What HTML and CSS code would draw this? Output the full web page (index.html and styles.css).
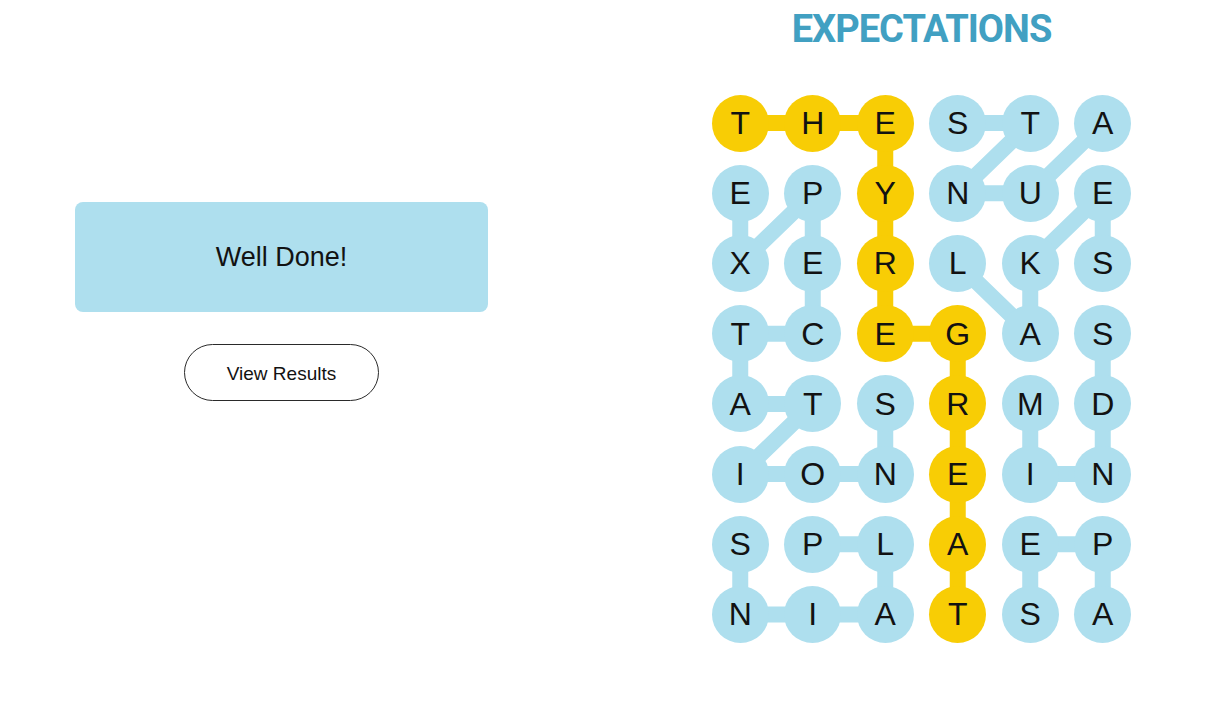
FILE: index.html
```html
<!DOCTYPE html>
<html lang="en">
<head>
<meta charset="utf-8">
<title>Strands – Expectations</title>
<link rel="stylesheet" href="styles.css">
</head>
<body>
<main class="page">
  <section class="left">
    <div class="done-box">Well Done!</div>
    <button class="results-btn" type="button">View Results</button>
  </section>
  <section class="right">
    <h1 class="theme">EXPECTATIONS</h1>
    <div class="board">
      <svg class="links" viewBox="0 0 435 561.6" width="435" height="561.6" aria-hidden="true">
        <g class="blue-links">
          <polyline points="398.75,35.1 326.25,105.3 253.75,105.3 326.25,35.1 253.75,35.1"/>
          <polyline points="36.25,105.3 36.25,175.5 108.75,105.3 108.75,245.7 36.25,245.7 36.25,315.9 108.75,315.9 36.25,386.1 181.25,386.1 181.25,315.9"/>
          <polyline points="253.75,175.5 326.25,245.7 326.25,175.5 398.75,105.3 398.75,175.5"/>
          <polyline points="326.25,315.9 326.25,386.1 398.75,386.1 398.75,315.9 398.75,245.7"/>
          <polyline points="108.75,456.3 181.25,456.3 181.25,526.5 36.25,526.5 36.25,456.3"/>
          <polyline points="398.75,526.5 398.75,456.3 326.25,456.3 326.25,526.5"/>
        </g>
        <g class="yellow-links">
          <polyline points="36.25,35.1 181.25,35.1 181.25,245.7 253.75,245.7 253.75,526.5"/>
        </g>
      </svg>
      <div class="cell"><span class="dot span">T</span></div>
      <div class="cell"><span class="dot span">H</span></div>
      <div class="cell"><span class="dot span">E</span></div>
      <div class="cell"><span class="dot">S</span></div>
      <div class="cell"><span class="dot">T</span></div>
      <div class="cell"><span class="dot">A</span></div>

      <div class="cell"><span class="dot">E</span></div>
      <div class="cell"><span class="dot">P</span></div>
      <div class="cell"><span class="dot span">Y</span></div>
      <div class="cell"><span class="dot">N</span></div>
      <div class="cell"><span class="dot">U</span></div>
      <div class="cell"><span class="dot">E</span></div>

      <div class="cell"><span class="dot">X</span></div>
      <div class="cell"><span class="dot">E</span></div>
      <div class="cell"><span class="dot span">R</span></div>
      <div class="cell"><span class="dot">L</span></div>
      <div class="cell"><span class="dot">K</span></div>
      <div class="cell"><span class="dot">S</span></div>

      <div class="cell"><span class="dot">T</span></div>
      <div class="cell"><span class="dot">C</span></div>
      <div class="cell"><span class="dot span">E</span></div>
      <div class="cell"><span class="dot span">G</span></div>
      <div class="cell"><span class="dot">A</span></div>
      <div class="cell"><span class="dot">S</span></div>

      <div class="cell"><span class="dot">A</span></div>
      <div class="cell"><span class="dot">T</span></div>
      <div class="cell"><span class="dot">S</span></div>
      <div class="cell"><span class="dot span">R</span></div>
      <div class="cell"><span class="dot">M</span></div>
      <div class="cell"><span class="dot">D</span></div>

      <div class="cell"><span class="dot">I</span></div>
      <div class="cell"><span class="dot">O</span></div>
      <div class="cell"><span class="dot">N</span></div>
      <div class="cell"><span class="dot span">E</span></div>
      <div class="cell"><span class="dot">I</span></div>
      <div class="cell"><span class="dot">N</span></div>

      <div class="cell"><span class="dot">S</span></div>
      <div class="cell"><span class="dot">P</span></div>
      <div class="cell"><span class="dot">L</span></div>
      <div class="cell"><span class="dot span">A</span></div>
      <div class="cell"><span class="dot">E</span></div>
      <div class="cell"><span class="dot">P</span></div>

      <div class="cell"><span class="dot">N</span></div>
      <div class="cell"><span class="dot">I</span></div>
      <div class="cell"><span class="dot">A</span></div>
      <div class="cell"><span class="dot span">T</span></div>
      <div class="cell"><span class="dot">S</span></div>
      <div class="cell"><span class="dot">A</span></div>
    </div>
  </section>
</main>
</body>
</html>
```

FILE: styles.css
```css
html, body {
  margin: 0;
  padding: 0;
  background: #ffffff;
}

body {
  font-family: "Liberation Sans", Arial, sans-serif;
  color: #121212;
  width: 1230px;
  height: 709px;
  overflow: hidden;
}

.page {
  display: flex;
  align-items: flex-start;
}

.left {
  width: 413px;
  margin-left: 75px;
  padding-top: 202px;
  display: flex;
  flex-direction: column;
  align-items: center;
}

.done-box {
  width: 100%;
  height: 110px;
  background: #aedfee;
  border-radius: 8px;
  display: flex;
  align-items: center;
  justify-content: center;
  font-size: 27px;
  color: #121212;
}

.results-btn {
  margin-top: 32px;
  width: 195px;
  height: 57px;
  border: 1px solid #2a2a2a;
  border-radius: 999px;
  background: #ffffff;
  font-family: "Liberation Sans", Arial, sans-serif;
  font-size: 19px;
  line-height: 1;
  padding: 2px 0 0 0;
  color: #121212;
}

.right {
  margin-left: 216px;
  width: 435px;
  padding-top: 7px;
  display: flex;
  flex-direction: column;
  align-items: center;
}

.theme {
  margin: 0 0 37px 0;
  font-family: Roboto, "Liberation Sans", sans-serif;
  font-weight: 700;
  font-size: 38px;
  line-height: 44px;
  letter-spacing: -1px;
  color: #41a0c2;
  text-align: center;
}

.board {
  position: relative;
  display: grid;
  grid-template-columns: repeat(6, 72.5px);
  grid-template-rows: repeat(8, 70.2px);
}

.links {
  position: absolute;
  left: 0;
  top: 0;
  z-index: 0;
}

.links polyline {
  fill: none;
  stroke-width: 16;
  stroke-linejoin: round;
  stroke-linecap: butt;
}

.blue-links polyline {
  stroke: #aedfee;
}

.yellow-links polyline {
  stroke: #f8cd05;
}

.cell {
  position: relative;
  z-index: 1;
  display: flex;
  align-items: center;
  justify-content: center;
}

.dot {
  width: 57px;
  height: 57px;
  border-radius: 50%;
  background: #aedfee;
  display: flex;
  align-items: center;
  justify-content: center;
  font-size: 32px;
  line-height: 1;
  color: #121212;
}

.dot.span {
  background: #f8cd05;
}
```
